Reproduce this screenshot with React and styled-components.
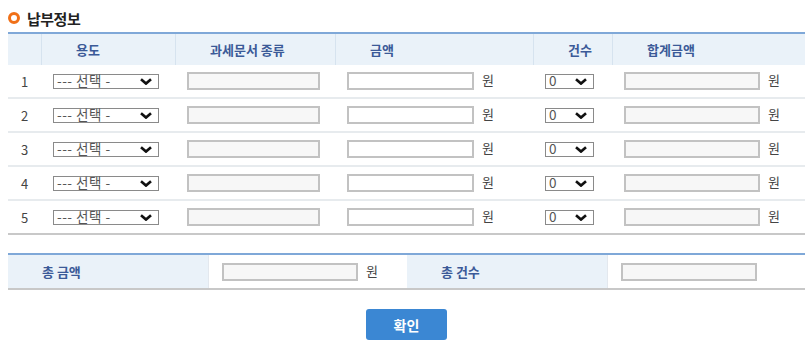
import React from "react";
import styled, { createGlobalStyle } from "styled-components";

const GlobalStyle = createGlobalStyle`
  body {
    margin: 0;
    background: #ffffff;
    font-family: "Noto Sans CJK KR", "Noto Sans", sans-serif;
    color: #333;
  }
`;

const Page = styled.div`
  width: 797px;
  padding: 10px 8px 0 8px;
`;

const Title = styled.h2`
  display: flex;
  align-items: center;
  gap: 7px;
  margin: 0 0 6px 0;
  height: 16px;
  font-size: 15px;
  font-weight: 700;
  color: #222;
  letter-spacing: -0.5px;
`;

const Ring = styled.span`
  width: 12px;
  height: 12px;
  box-sizing: border-box;
  border: 3px solid #f07018;
  border-radius: 50%;
`;

const COLS = "33px 134px 160px 198px 79px 193px";

const HeadRow = styled.div`
  display: grid;
  grid-template-columns: ${COLS};
  border-top: 2px solid #7fa8d8;
  background: #eaf2f9;
  height: 31px;
`;

const HeadCell = styled.div`
  display: flex;
  align-items: center;
  padding-left: 34px;
  font-size: 13px;
  font-weight: 700;
  color: #3b5a98;
  border-left: ${(p) => (p.$first ? "none" : "1px solid #d6e3ef")};
`;

const Row = styled.div`
  display: grid;
  grid-template-columns: ${COLS};
  height: 32px;
  border-bottom: 2px solid ${(p) => (p.$last ? "#c8c8c8" : "#e7ebee")};
`;

const Cell = styled.div`
  display: flex;
  align-items: center;
  padding-left: ${(p) => (p.$center ? "0" : "12px")};
  justify-content: ${(p) => (p.$center ? "center" : "flex-start")};
  font-size: 13px;
  color: #444;
`;

const SelectBox = styled.div`
  box-sizing: border-box;
  display: flex;
  align-items: center;
  justify-content: space-between;
  width: ${(p) => p.$w}px;
  height: 15px;
  padding: 0 6px 0 3px;
  border: 1px solid #8a8a8a;
  background: #fff;
  font-size: 13.5px;
  line-height: 13px;
  letter-spacing: 0.5px;
  color: #555;
  cursor: pointer;
`;

const SelectLabel = styled.span`
  white-space: nowrap;
  margin-top: -1px;
`;

const TextBox = styled.input`
  box-sizing: border-box;
  width: ${(p) => p.$w}px;
  height: 18px;
  margin: 0;
  border: 2px solid #c2c2c2;
  background: ${(p) => (p.$white ? "#ffffff" : "#f7f7f7")};
  padding: 0 3px;
  font-size: 12px;
`;

const Unit = styled.span`
  margin-left: 8px;
  margin-top: -3px;
  font-size: 13px;
  color: #444;
`;

const Summary = styled.div`
  display: grid;
  grid-template-columns: 200px 199px 200px 198px;
  margin-top: 18px;
  height: 33px;
  border-top: 2px solid #7fa8d8;
  border-bottom: 2px solid #c8c8c8;
`;

const SumLabel = styled.div`
  display: flex;
  align-items: center;
  padding-left: 34px;
  background: #eaf2f9;
  font-size: 13px;
  font-weight: 700;
  color: #3b5a98;
`;

const SumValue = styled.div`
  display: flex;
  align-items: center;
  padding-left: 13px;
  border-left: 1px solid #e3e8ee;
`;

const Actions = styled.div`
  display: flex;
  justify-content: center;
  padding-top: 19px;
`;

const Button = styled.button`
  width: 81px;
  height: 31px;
  border: none;
  border-radius: 3px;
  background: #3b87d3;
  color: #fff;
  font-family: "Noto Sans CJK KR", sans-serif;
  font-size: 14px;
  font-weight: 700;
  cursor: pointer;
`;

const Dropdown = ({ w, label }) => (
  <SelectBox $w={w} role="combobox">
    <SelectLabel>{label}</SelectLabel>
    <svg width="12" height="7" viewBox="0 0 12 7">
      <path d="M1 1.2 L6 5.6 L11 1.2" fill="none" stroke="#111" strokeWidth="2.6" />
    </svg>
  </SelectBox>
);

const rows = [1, 2, 3, 4, 5];

const App = () => (
  <>
    <GlobalStyle />
    <Page>
      <Title>
        <Ring />
        납부정보
      </Title>
      <HeadRow>
        <HeadCell $first />
        <HeadCell>용도</HeadCell>
        <HeadCell>과세문서 종류</HeadCell>
        <HeadCell>금액</HeadCell>
        <HeadCell>건수</HeadCell>
        <HeadCell>합계금액</HeadCell>
      </HeadRow>
      {rows.map((n) => (
        <Row key={n} $last={n === rows.length}>
          <Cell $center>{n}</Cell>
          <Cell>
            <Dropdown w={106} label="--- 선택 -" />
          </Cell>
          <Cell>
            <TextBox $w={133} />
          </Cell>
          <Cell>
            <TextBox $w={127} $white />
            <Unit>원</Unit>
          </Cell>
          <Cell>
            <Dropdown w={49} label="0" />
          </Cell>
          <Cell>
            <TextBox $w={136} />
            <Unit>원</Unit>
          </Cell>
        </Row>
      ))}
      <Summary>
        <SumLabel>총 금액</SumLabel>
        <SumValue>
          <TextBox $w={136} />
          <Unit>원</Unit>
        </SumValue>
        <SumLabel>총 건수</SumLabel>
        <SumValue>
          <TextBox $w={136} />
        </SumValue>
      </Summary>
      <Actions>
        <Button type="button">확인</Button>
      </Actions>
    </Page>
  </>
);

export default App;
